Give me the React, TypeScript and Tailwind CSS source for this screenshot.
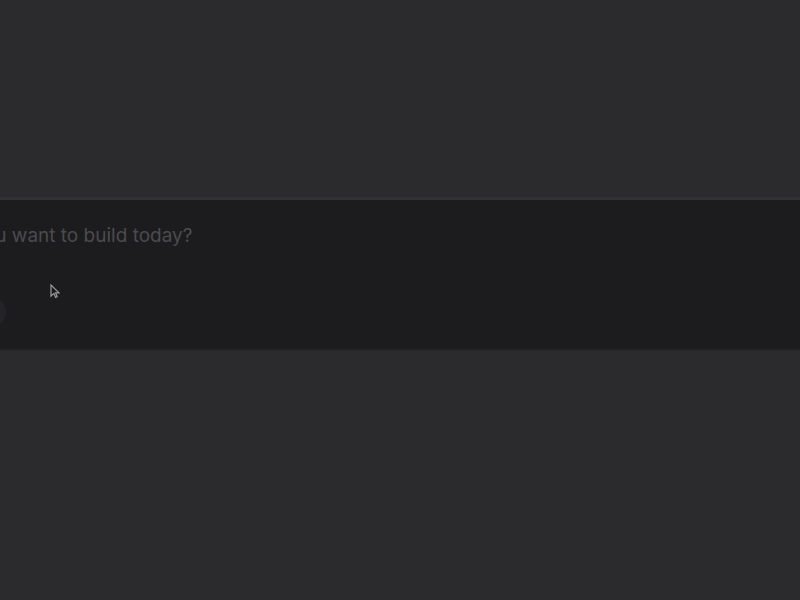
export default function App() {
  return (
    <div className="h-[600px] w-[800px] overflow-hidden bg-[#2b2b2e] flex flex-col font-['Inter',sans-serif]">
      <div className="h-[197px] shrink-0" />
      <div className="h-[3px] shrink-0 bg-[#313135]" />
      <div className="relative h-[149px] shrink-0 bg-[#1c1c1e] overflow-hidden">
        <div className="pt-[22px] -ml-[107px] whitespace-nowrap text-[19px] text-[#4b4b4e]">
          What do you want to build today?
        </div>
        <div className="absolute left-[-22px] top-[98px] h-[28px] w-[28px] rounded-full bg-[#242428]" />
        <svg className="absolute left-[50px] top-[84px]" width="10" height="15" viewBox="0 0 10 15">
          <path d="M1 1 L1 12 L3.8 9.4 L5.6 13.5 L7.2 12.8 L5.5 8.8 L9 8.8 Z" fill="#1a1a1a" stroke="#9a9a9c" strokeWidth="1.2" />
        </svg>
      </div>
      <div className="h-[2px] shrink-0 bg-[#252528]" />
    </div>
  );
}
